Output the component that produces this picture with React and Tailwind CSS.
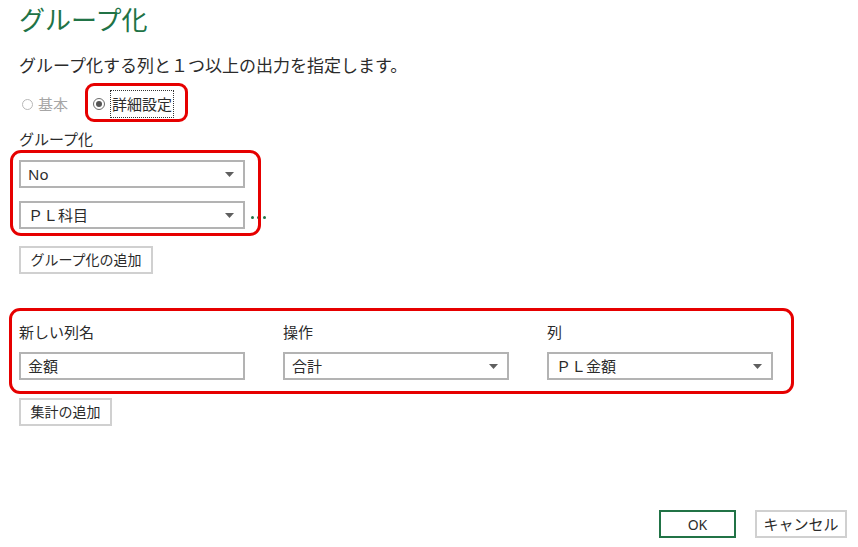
import { useState } from "react";

const font = { fontFamily: '"Noto Sans", "Noto Sans CJK JP", sans-serif' };

function Caret() {
  return (
    <svg width="9" height="5" viewBox="0 0 9 5" className="shrink-0">
      <path d="M0 0 H9 L4.5 5 Z" fill="#5f5f5f" />
    </svg>
  );
}

function Dropdown({ value, className = "" }) {
  return (
    <div
      className={`flex items-center justify-between h-[28px] border-2 border-[#b3b3b3] bg-white pl-[7px] pr-[9px] text-[15px] text-[#2b2b2b] ${className}`}
    >
      <span className="leading-none">{value}</span>
      <Caret />
    </div>
  );
}

function Button({ children, className = "" }) {
  return (
    <button className={`h-[28px] border-2 border-[#d0d0d0] bg-white text-[14px] text-[#2b2b2b] leading-none ${className}`}>
      {children}
    </button>
  );
}

export default function App() {
  const [mode, setMode] = useState("advanced");

  return (
    <div className="relative h-screen bg-white flex flex-col pl-[19px] pr-[11px]" style={font}>
      {/* annotation boxes */}
      <div className="absolute left-[85px] top-[83px] w-[103px] h-[39px] border-[3px] border-[#e60000] rounded-[9px] pointer-events-none" />
      <div className="absolute left-[10px] top-[150px] w-[251px] h-[86px] border-[3px] border-[#e60000] rounded-[11px] pointer-events-none" />
      <div className="absolute left-[9px] top-[308px] w-[785px] h-[86px] border-[3px] border-[#e60000] rounded-[11px] pointer-events-none" />

      <h1 className="pt-[3px] text-[26px] leading-[34px] text-[#217346] font-normal">グループ化</h1>
      <p className="mt-[17px] text-[17px] leading-[24px] text-[#2b2b2b]">
        グループ化する列と１つ以上の出力を指定します。
      </p>

      {/* radio row */}
      <div className="mt-[12px] flex items-center h-[28px] text-[15px]">
        <label className="ml-[3px] flex items-center gap-[5px] text-[#a6a6a6]" onClick={() => setMode("basic")}>
          <span className="w-[11px] h-[11px] rounded-full border border-[#b8b8b8] flex items-center justify-center">
            {mode === "basic" && <span className="w-[5px] h-[5px] rounded-full bg-[#444]" />}
          </span>
          基本
        </label>
        <label className="ml-[25px] flex items-center gap-[5px] text-[#2b2b2b]" onClick={() => setMode("advanced")}>
          <span className="w-[12px] h-[12px] rounded-full border border-[#6b6b6b] flex items-center justify-center">
            {mode === "advanced" && <span className="w-[6px] h-[6px] rounded-full bg-[#555]" />}
          </span>
          <span className="border border-dotted border-[#333] px-[1px] h-[28px] flex items-center">詳細設定</span>
        </label>
      </div>

      <div className="mt-[11px] text-[15px] leading-[20px] text-[#2b2b2b]">グループ化</div>

      <Dropdown value="No" className="mt-[11px] w-[226px]" />
      <div className="mt-[13px] flex items-center gap-[6px]">
        <Dropdown value="ＰＬ科目" className="w-[226px]" />
        <div className="flex gap-[3px] mt-[4px]">
          <span className="w-[3px] h-[3px] rounded-full bg-[#217346]" />
          <span className="w-[3px] h-[3px] rounded-full bg-[#217346]" />
          <span className="w-[3px] h-[3px] rounded-full bg-[#217346]" />
        </div>
      </div>

      <Button className="mt-[17px] w-[134px]">グループ化の追加</Button>

      {/* aggregation */}
      <div className="mt-[48px] grid grid-cols-[226px_226px_226px] gap-x-[38px] text-[15px] text-[#2b2b2b]">
        <div className="leading-[20px]">新しい列名</div>
        <div className="leading-[20px]">操作</div>
        <div className="leading-[20px]">列</div>
        <div className="mt-[10px] h-[28px] border-2 border-[#b3b3b3] pl-[7px] flex items-center">金額</div>
        <Dropdown value="合計" className="mt-[10px]" />
        <Dropdown value="ＰＬ金額" className="mt-[10px]" />
      </div>

      <Button className="mt-[18px] w-[93px]">集計の追加</Button>

      {/* footer */}
      <div className="mt-auto mb-[9px] flex justify-end gap-[19px]">
        <button className="h-[28px] w-[77px] border-2 border-[#217346] bg-white text-[14px] text-[#2b2b2b]">OK</button>
        <Button className="w-[92px] text-[15px]">キャンセル</Button>
      </div>
    </div>
  );
}
